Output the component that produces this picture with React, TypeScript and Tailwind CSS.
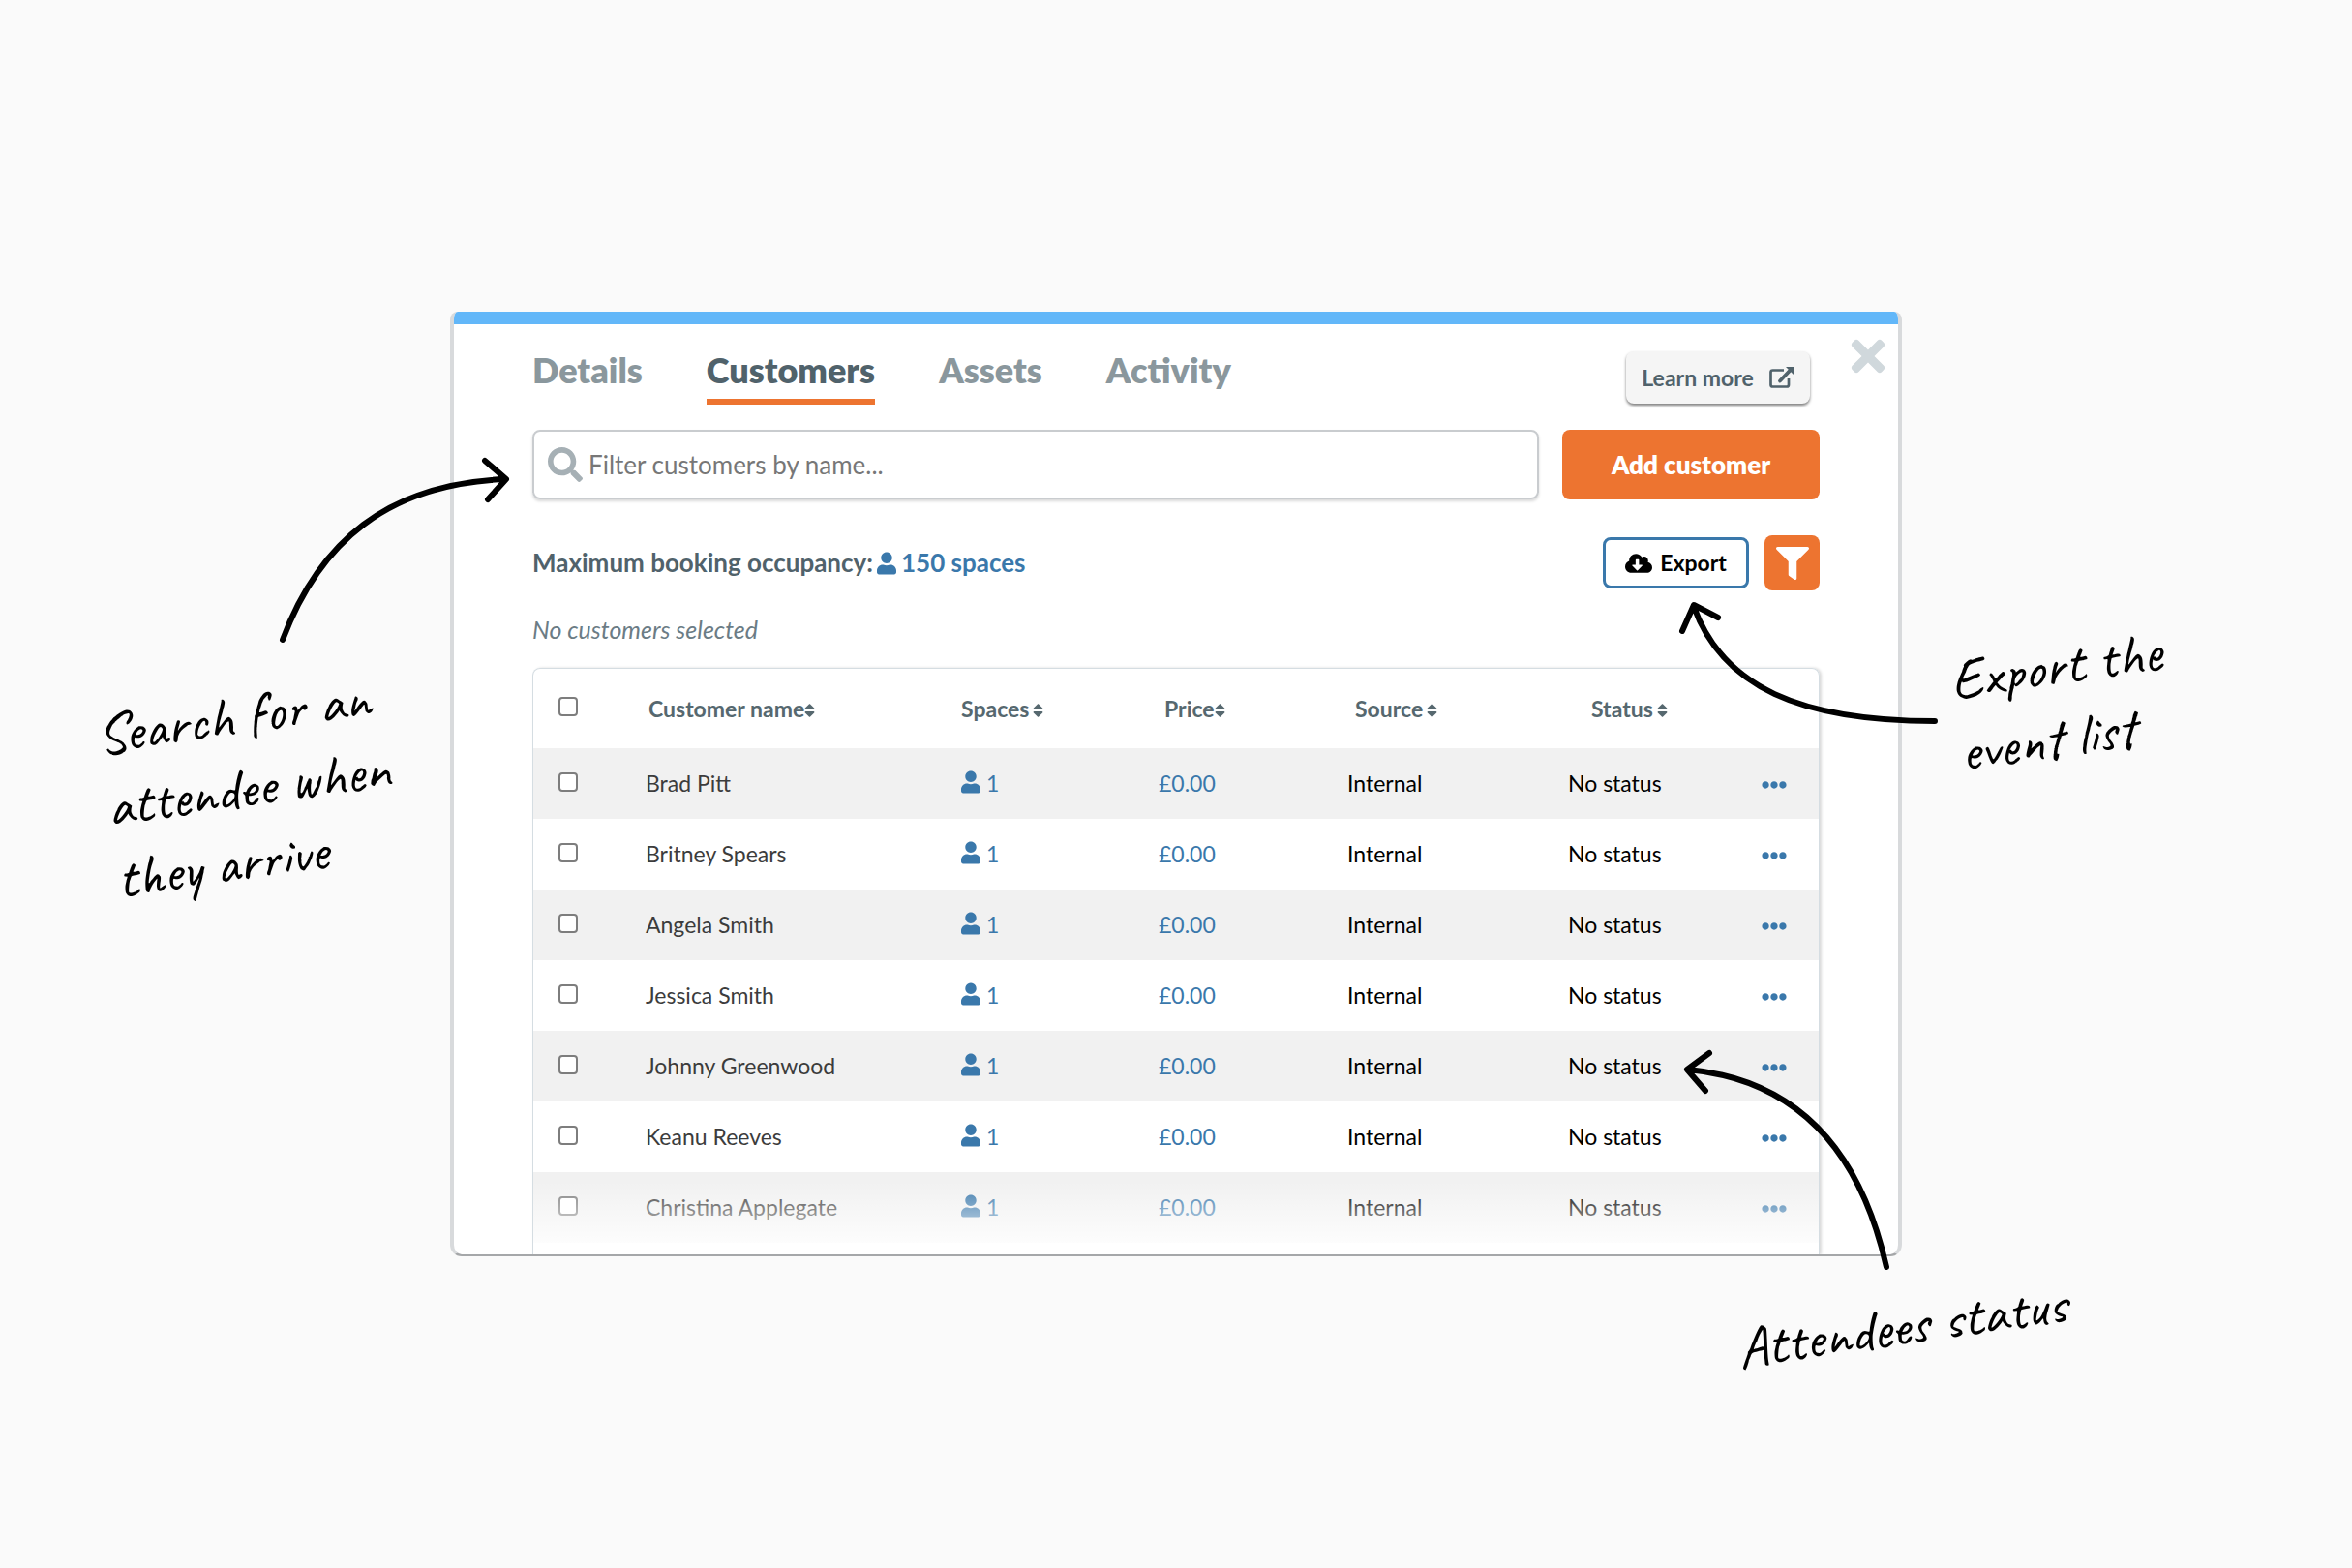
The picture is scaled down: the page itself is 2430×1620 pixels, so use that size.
import React, { useState } from "react";
import {
  FaCloudDownloadAlt,
  FaEllipsisH,
  FaFilter,
  FaSearch,
  FaSort,
  FaTimes,
  FaUser,
} from "react-icons/fa";

const tabs = ["Details", "Customers", "Assets", "Activity"];

const columns = [
  { label: "Customer name", pad: "pl-[3px]", gap: "" },
  { label: "Spaces", pad: "pl-0", gap: "gap-1" },
  { label: "Price", pad: "pl-1.5", gap: "" },
  { label: "Source", pad: "pl-2", gap: "gap-1" },
  { label: "Status", pad: "pl-6", gap: "gap-1" },
];

const customers = [
  "Brad Pitt",
  "Britney Spears",
  "Angela Smith",
  "Jessica Smith",
  "Johnny Greenwood",
  "Keanu Reeves",
  "Christina Applegate",
];

const ExternalLinkIcon = () => (
  <svg viewBox="0 0 26 24" className="h-6 w-[26px]" fill="none" aria-hidden="true">
    <path
      d="M15 4.500H3.500Q1.500 4.500 1.500 6.500V19.500Q1.500 21.500 3.500 21.500H18Q20 21.500 20 19.500V13"
      stroke="currentColor"
      strokeWidth="2.700"
    />
    <path
      d="M11 15.500L21 5"
      stroke="currentColor"
      strokeWidth="3.800"
      strokeLinecap="round"
    />
    <path d="M17 1H26V10Z" fill="currentColor" />
  </svg>
);

const Arrows = () => (
  <svg
    className="pointer-events-none absolute left-0 top-0 h-full w-full overflow-visible"
    fill="none"
    stroke="black"
    strokeWidth="6"
    strokeLinecap="round"
    strokeLinejoin="round"
    aria-hidden="true"
  >
    <path d="M-173 339C-135 238 -65 178 57 173M36 154L58 173L39 194" />
    <path d="M1534 423C1395 423 1315 388 1285 305M1273 330L1285 303L1310 316" />
    <path d="M1279 783C1385 793 1455 858 1484 987M1301 766L1278 783L1297 805" />
  </svg>
);

interface NoteProps {
  className: string;
  lines: string[];
}

const Note = ({ className, lines }: NoteProps) => (
  <p
    className={
      "absolute origin-top-left -rotate-8 whitespace-nowrap font-[Caveat,Lato,sans-serif] text-6xl leading-[75px] text-black " +
      className
    }
  >
    {lines.map((line) => (
      <span key={line} className="block">
        {line}
      </span>
    ))}
  </p>
);

const CustomerTable = () => {
  const [selected, setSelected] = useState<string[]>([]);

  const toggle = (name: string) => {
    setSelected(
      selected.includes(name)
        ? selected.filter((item) => item !== name)
        : [...selected, name]
    );
  };

  const checkbox =
    "mb-1 block size-5 appearance-none rounded-[4px] border-2 border-[#7d7d7d] bg-white checked:bg-[#3a78ab]";

  return (
    <>
      <p className="mt-6 text-[25px] leading-8 italic text-[#6b7c85]">
        {selected.length === 0
          ? "No customers selected"
          : selected.length + " selected"}
      </p>
      <div className="relative mt-6 overflow-hidden rounded-t-lg border border-b-0 border-[#d5dde2] shadow-[2px_0_3px_rgba(0,0,0,0.15)]">
        <table className="w-full table-fixed text-left text-[23px]">
          <colgroup>
            <col className="w-[116px]" />
            <col className="w-[326px]" />
            <col className="w-[204px]" />
            <col className="w-[195px]" />
            <col className="w-[228px]" />
            <col className="w-[200px]" />
            <col />
          </colgroup>
          <thead>
            <tr className="h-[82px] text-[#56686f]">
              <th className="pl-[26px]">
                <input
                  type="checkbox"
                  aria-label="Select all customers"
                  className={checkbox}
                  checked={selected.length === customers.length}
                  onChange={() =>
                    setSelected(
                      selected.length === customers.length ? [] : customers
                    )
                  }
                />
              </th>
              {columns.map((column) => (
                <th key={column.label} className={"font-bold " + column.pad}>
                  <button className={"flex items-center " + column.gap}>
                    {column.label}
                    <FaSort className="mt-1 h-[18px] w-[11px]" />
                  </button>
                </th>
              ))}
              <th />
            </tr>
          </thead>
          <tbody>
            {customers.map((name) => (
              <tr key={name} className="h-[73px] text-black odd:bg-[#f1f1f1]">
                <td className="pl-[26px]">
                  <input
                    type="checkbox"
                    aria-label={"Select " + name}
                    className={checkbox}
                    checked={selected.includes(name)}
                    onChange={() => toggle(name)}
                  />
                </td>
                <td className="whitespace-nowrap text-[#3c3c3c]">{name}</td>
                <td className="text-[#3a78ab]">
                  <span className="flex items-center gap-1.5">
                    <FaUser className="mb-1 h-6 w-5" />1
                  </span>
                </td>
                <td className="text-[#3a78ab]">£0.00</td>
                <td>Internal</td>
                <td>No status</td>
                <td>
                  <button aria-label={"Actions for " + name} className="block pt-0.5">
                    <FaEllipsisH className="size-[26px] text-[#3a78ab]" />
                  </button>
                </td>
              </tr>
            ))}
          </tbody>
        </table>
        <div className="h-3" />
        <div className="pointer-events-none absolute inset-x-0 bottom-0 h-[76px] bg-linear-to-b from-white/0 to-white" />
      </div>
    </>
  );
};

const App = () => {
  const [activeTab, setActiveTab] = useState("Customers");
  const [filter, setFilter] = useState("");

  return (
    <main className="flex min-h-screen items-center justify-center overflow-hidden bg-[#fafafa] font-[Lato,sans-serif]">
      <div className="relative w-full max-w-[1500px]">
        <section className="overflow-hidden rounded-t-lg rounded-b-xl border-x-4 border-b-2 border-x-[#d8dadc] border-b-[#a5a7a9] bg-white">
          <div className="h-[13px] bg-[#62b7f9]" />
          <div className="relative px-[81px]">
            <div className="flex items-start justify-between">
              <nav className="mt-[21px] flex gap-[66px]">
                {tabs.map((tab) => (
                  <button
                    key={tab}
                    onClick={() => setActiveTab(tab)}
                    className={
                      "border-b-6 pb-1 text-4xl leading-[52px] font-extrabold " +
                      (tab === activeTab
                        ? "border-[#ed7430] text-[#50626b]"
                        : "border-transparent text-[#8a979d]")
                    }
                  >
                    {tab}
                  </button>
                ))}
              </nav>
              <a
                href="#learn-more"
                className="mt-7 mr-2.5 flex h-[54px] w-[190px] items-center justify-center gap-4 rounded-lg bg-[#f5f5f5] text-[23px] font-bold text-[#50626b] shadow-[0_2px_3px_rgba(0,0,0,0.5)]"
              >
                Learn more
                <ExternalLinkIcon />
              </a>
            </div>
            <button
              aria-label="Close"
              className="absolute top-2 right-[6px] text-[#d0d8dc]"
            >
              <FaTimes className="size-[50px]" />
            </button>

            <div className="mt-[26px] flex gap-6">
              <label className="flex h-[72px] flex-1 items-center gap-1.5 rounded-lg border-2 border-[#c9cccf] px-3.5 shadow-[0_2px_3px_rgba(0,0,0,0.15)]">
                <FaSearch className="size-9 text-[#a6b0b5]" />
                <input
                  type="text"
                  aria-label="Filter customers by name"
                  placeholder="Filter customers by name..."
                  value={filter}
                  onChange={(e) => setFilter(e.target.value)}
                  className="flex-1 text-[26px] outline-none placeholder:text-[#777777]"
                />
              </label>
              <button className="h-[72px] w-[266px] rounded-lg bg-[#ed7430] text-[26px] font-extrabold text-white">
                Add customer
              </button>
            </div>

            <div className="mt-[37px] flex items-center justify-between">
              <p className="flex items-center gap-1 text-[26px] font-bold text-[#50626b]">
                Maximum booking occupancy:
                <span className="flex items-center gap-[5px] text-[#3a78ab]">
                  <FaUser className="h-6 w-5" />
                  150 spaces
                </span>
              </p>
              <div className="flex items-center gap-4">
                <button className="flex h-[53px] w-[151px] items-center justify-center gap-2 rounded-lg border-3 border-[#3a78ab] text-[23px] font-bold text-black">
                  <FaCloudDownloadAlt className="size-7" />
                  Export
                </button>
                <button
                  aria-label="Filter"
                  className="flex size-[57px] items-center justify-center rounded-lg bg-[#ed7430] text-white"
                >
                  <FaFilter className="size-[34px]" />
                </button>
              </div>
            </div>

            <CustomerTable />
          </div>
        </section>

        <Arrows />
        <Note
          className="top-[401px] left-[-370px]"
          lines={["Search for an", "attendee when", "they arrive"]}
        />
        <Note
          className="top-[344px] left-[1545px]"
          lines={["Export the", "event list"]}
        />
        <Note className="top-[1035px] left-[1325px]" lines={["Attendees status"]} />
      </div>
    </main>
  );
};

export default App;
